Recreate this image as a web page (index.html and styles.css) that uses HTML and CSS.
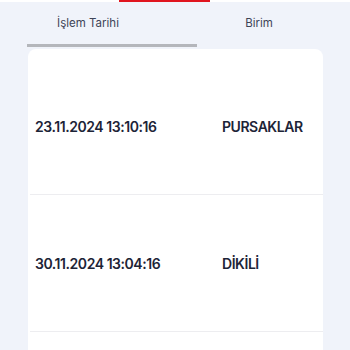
FILE: index.html
```html
<!DOCTYPE html>
<html lang="tr">
<head>
<meta charset="utf-8">
<link rel="stylesheet" href="styles.css">
</head>
<body>
<div class="topbar"><span class="topbar-active"></span></div>
<div class="tabs">
  <div class="tab">İşlem Tarihi</div>
  <div class="tab">Birim</div>
</div>
<div class="scroll-indicator"></div>
<div class="card">
  <div class="row">
    <div class="cell date">23.11.2024 13:10:16</div>
    <div class="cell unit">PURSAKLAR</div>
  </div>
  <div class="row">
    <div class="cell date">30.11.2024 13:04:16</div>
    <div class="cell unit">DİKİLİ</div>
  </div>
  <div class="row">
    <div class="cell date"></div>
    <div class="cell unit"></div>
  </div>
</div>
</body>
</html>
```
FILE: styles.css
```css
html, body {
  margin: 0;
  padding: 0;
  background: #f0f3fa;
  font-family: "Inter", "Noto Sans", sans-serif;
  overflow: hidden;
  height: 350px;
}
.topbar {
  height: 2px;
  background: #ffffff;
  padding-left: 119px;
  display: flex;
}
.topbar-active {
  width: 91px;
  height: 2px;
  background: #e0141e;
}
.tabs {
  display: grid;
  grid-template-columns: 176px 166px;
  height: 42px;
  align-items: center;
}
.tab {
  text-align: center;
  font-size: 11.5px;
  color: #3e4457;
}
.scroll-indicator {
  margin-left: 27px;
  width: 170px;
  height: 3px;
  background: #b4b6bb;
}
.card {
  margin: 2px 27px 0 28px;
  background: #ffffff;
  border-radius: 8px 8px 0 0;
  padding-top: 9px;
}
.row {
  display: grid;
  grid-template-columns: 192px 1fr;
  height: 136px;
  align-items: center;
  border-bottom: 1px solid #ededf0;
  margin-left: 2px;
}
.cell {
  font-size: 14px;
  font-weight: 600;
  color: #1d2437;
  letter-spacing: -0.45px;
}
.date {
  padding-left: 5px;
}
```
